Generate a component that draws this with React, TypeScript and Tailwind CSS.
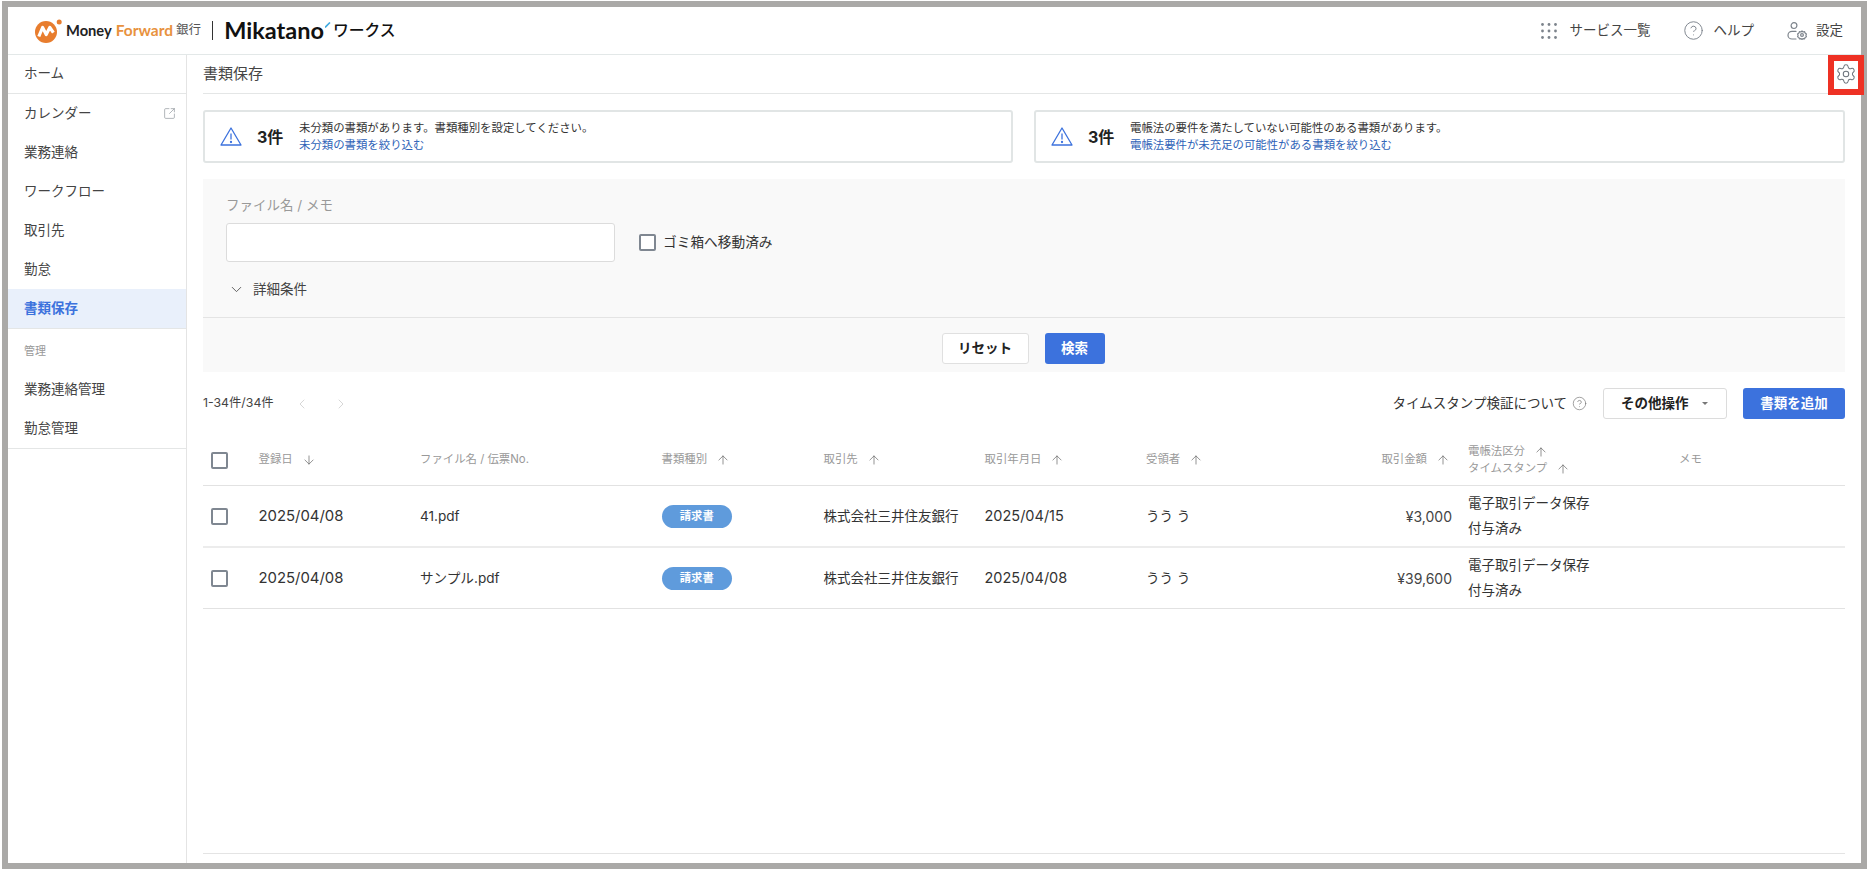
import { ChevronDown, ChevronLeft, ChevronRight, ArrowUp, ArrowDown, Settings, SquareArrowOutUpRight, CircleHelp } from 'lucide-react';

const navTop = ['カレンダー', '業務連絡', 'ワークフロー', '取引先', '勤怠'];

const rows = [
  { date: '2025/04/08', file: '41.pdf', dealt: '2025/04/15', amount: '¥3,000' },
  { date: '2025/04/08', file: 'サンプル.pdf', dealt: '2025/04/08', amount: '¥39,600' },
];

const gridCols = 'grid grid-cols-[55.5px_161.5px_241.5px_162px_161px_161.5px_154px_168px_211px_1fr]';

const GridDots = () => (
  <svg width="16" height="16" viewBox="0 0 16 16" fill="#7d848c">
    {[1.5, 8, 14.5].map((y) =>
      [1.5, 8, 14.5].map((x) => <circle key={`${x}-${y}`} cx={x} cy={y} r="1.4" />)
    )}
  </svg>
);

const UserGear = () => (
  <svg width="20" height="18" viewBox="0 0 20 18" fill="none" stroke="#7d848c" strokeWidth="1.2">
    <circle cx="7" cy="3.6" r="2.9" />
    <path d="M9 9.4H5C2.8 9.4 1 11 1 13.2S2.8 17 5 17h4" strokeLinecap="round" />
    <circle cx="15" cy="13" r="1.4" />
    <path d="M15 9l1.1 1 1.5-.3.5 1.4 1.3.9-.5 1.4.5 1.4-1.3.7-.5 1.4-1.5-.3-1.1.8-1.1-.8-1.5.3-.5-1.4-1.3-.7.5-1.4-.5-1.4 1.3-.9.5-1.4 1.5.3z" strokeLinejoin="round" />
  </svg>
);

const WarnIcon = () => (
  <svg width="22" height="19" viewBox="0 0 22 19" fill="none" stroke="#3c72dd" strokeWidth="1.3" className="shrink-0">
    <path d="M11 1l10 17H1z" strokeLinejoin="round" />
    <path d="M11 6.5v6" />
    <circle cx="11" cy="15" r="0.5" fill="#3c72dd" />
  </svg>
);

const Logo = () => (
  <div className="flex items-center">
    <svg width="27" height="24" viewBox="0 0 27 24" className="ml-[27px] shrink-0">
      <circle cx="11" cy="13" r="11" fill="#e87d2e" />
      <path d="M3.8 17.5L7.6 8.5l3.6 7 3.6-7 3.6 5.2" fill="none" stroke="#fff" strokeWidth="3.2" strokeLinejoin="round" />
      <circle cx="24.2" cy="3" r="2.5" fill="#e87d2e" />
    </svg>
    <span className="ml-[4px] font-['Lato',sans-serif] text-[14.7px] font-bold text-[#222] leading-none">Money</span>
    <span className="ml-[4px] font-['Lato',sans-serif] text-[15.5px] font-bold text-[#e8923e] leading-none">Forward</span>
    <span className="ml-[3px] text-[12.5px] text-[#555] leading-none">銀行</span>
    <div className="ml-[11px] w-px h-[19px] bg-[#333]" />
    <span className="ml-[11px] font-['Lato',sans-serif] text-[23.5px] font-bold text-[#111] leading-none">Mikatano</span>
    <svg width="6" height="6" viewBox="0 0 6 6" className="-mt-[11px] ml-[1px]">
      <path d="M0 5.5L5 0.5" stroke="#3fa9e0" strokeWidth="1.6" />
    </svg>
    <span className="ml-[2px] text-[15.8px] font-medium text-[#111] leading-none">ワークス</span>
  </div>
);

const NavItem = ({ label, active, external }: { label: string; active?: boolean; external?: boolean }) => (
  <div className={`h-[39px] flex items-center justify-between pl-4 pr-[10px] text-[13.5px] ${active ? 'bg-[#e9f0fb] text-[#3c72dd] font-bold' : 'text-[#444]'}`}>
    {label}
    {external && <SquareArrowOutUpRight size={13} strokeWidth={1.2} className="text-[#888f96]" />}
  </div>
);

const AlertCard = ({ text, link }: { text: string; link: string }) => (
  <div className="h-[53px] flex items-center pl-[15px] border-2 border-[#e1e5e5] rounded-[3px] bg-white">
    <WarnIcon />
    <span className="ml-[15px] w-[42px] shrink-0 text-[16px] font-bold text-[#222]">3件</span>
    <div className="text-[11.4px] leading-[17px]">
      <p className="text-[#333]">{text}</p>
      <p className="text-[#2f63b8]">{link}</p>
    </div>
  </div>
);

const Sort = ({ label, down }: { label: string; down?: boolean }) => (
  <span className="flex items-center gap-[9px]">
    {label}
    {down ? <ArrowDown size={14} strokeWidth={1.2} className="text-[#666]" /> : <ArrowUp size={14} strokeWidth={1.2} className="text-[#666]" />}
  </span>
);

const Checkbox = () => <div className="w-[17px] h-[17px] border-2 border-[#7f8791] rounded-[2px] bg-white ml-2" />;

export default function App() {
  return (
    <div lang="ja" className="ml-[2px] mt-px w-[1865px] h-[868px] border-[6px] border-[#aaa9a7] flex flex-col bg-white font-[Inter,'Noto_Sans_CJK_JP',sans-serif] text-[#333]">
      <header className="h-[48px] shrink-0 border-b border-[#e3e8e8] flex items-center justify-between">
        <Logo />
        <div className="flex items-center text-[13.5px] text-[#444] pr-[18px]">
          <GridDots />
          <span className="ml-[13px]">サービス一覧</span>
          <CircleHelp size={21} strokeWidth={1.1} className="ml-[32px] text-[#7d848c]" />
          <span className="ml-[10px]">ヘルプ</span>
          <div className="ml-[33px]"><UserGear /></div>
          <span className="ml-[9px]">設定</span>
        </div>
      </header>

      <div className="flex flex-1 min-h-0">
        <aside className="w-[179px] shrink-0 border-r border-[#e4e4e4]">
          <div className="h-[39px] flex items-center pl-4 pb-px text-[13.5px] text-[#444] border-b border-[#e4e6e6]">ホーム</div>
          <div className="border-b border-[#e4e6e6]">
            {navTop.map((label) => (
              <NavItem key={label} label={label} external={label === 'カレンダー'} />
            ))}
            <NavItem label="書類保存" active />
          </div>
          <div className="h-[41px] flex items-center pl-4 pt-[3px] text-[11px] text-[#999]">管理</div>
          <div className="border-b border-[#e4e6e6]">
            <NavItem label="業務連絡管理" />
            <NavItem label="勤怠管理" />
          </div>
        </aside>

        <main className="relative flex-1 min-w-0 px-4 flex flex-col">
          <div className="h-[39px] shrink-0 flex items-center border-b border-[#e4e6e6] text-[15px] text-[#444]">書類保存</div>
          <div className="absolute -right-[3px] top-0 w-[36px] h-[40px] border-[6px] border-[#ee3124] bg-white flex items-center justify-center pb-[3px]">
            <Settings size={22} strokeWidth={1.1} className="text-[#6d747c] shrink-0" />
          </div>

          <div className="mt-4 grid grid-cols-[810px_811px] justify-between">
            <AlertCard text="未分類の書類があります。書類種別を設定してください。" link="未分類の書類を絞り込む" />
            <AlertCard text="電帳法の要件を満たしていない可能性のある書類があります。" link="電帳法要件が未充足の可能性がある書類を絞り込む" />
          </div>

          <section className="mt-4 h-[193px] shrink-0 bg-[#f9f9f9] flex flex-col">
            <div className="h-[139px] px-[23px] pt-4 border-b border-[#e4e4e4]">
              <p className="h-5 leading-5 text-[13.5px] text-[#999]">ファイル名 / メモ</p>
              <div className="mt-2 flex items-center">
                <div className="w-[389px] h-[39px] border border-[#dcdcdc] rounded-[3px] bg-white" />
                <div className="ml-[24px] w-[17px] h-[17px] border-2 border-[#7f8791] rounded-[2px] bg-white" />
                <span className="ml-[7px] text-[13.7px] text-[#333]">ゴミ箱へ移動済み</span>
              </div>
              <div className="mt-[17px] flex items-center text-[13.5px] text-[#444]">
                <ChevronDown size={17} strokeWidth={1.3} className="ml-[2px] text-[#555]" />
                <span className="ml-2">詳細条件</span>
              </div>
            </div>
            <div className="flex-1 flex justify-center items-start pt-[15px] gap-4 pr-[2px]">
              <button className="w-[87px] h-[31px] border border-[#e0e0e0] rounded-[3px] bg-white text-[13.5px] font-bold text-[#222]">リセット</button>
              <button className="w-[60px] h-[31px] rounded-[3px] bg-[#3c72dd] text-[13.5px] font-bold text-white">検索</button>
            </div>
          </section>

          <div className="mt-4 h-[31px] shrink-0 flex items-center">
            <span className="text-[12.3px] text-[#444]">1-34件/34件</span>
            <ChevronLeft size={16} strokeWidth={1.1} className="ml-[20px] text-[#c8c8c8]" />
            <ChevronRight size={16} strokeWidth={1.1} className="ml-[23px] text-[#c8c8c8]" />
            <span className="ml-auto text-[13.5px] text-[#333]">タイムスタンプ検証について</span>
            <CircleHelp size={15} strokeWidth={1.1} className="ml-[5px] text-[#777]" />
            <button className="ml-4 w-[124px] h-[31px] border border-[#dcdcdc] rounded-[3px] bg-white flex items-center pl-[17px] text-[13.5px] font-bold text-[#222]">
              その他操作
              <span className="ml-[13px] w-0 h-0 border-x-[3px] border-x-transparent border-t-[3px] border-t-[#777]" />
            </button>
            <button className="ml-4 w-[102px] h-[31px] rounded-[3px] bg-[#3c72dd] text-[13.5px] font-bold text-white">書類を追加</button>
          </div>

          <div className={`mt-4 h-[51px] shrink-0 border-b border-[#e2e2e2] items-center text-[11.4px] text-[#999] ${gridCols}`}>
            <Checkbox />
            <Sort label="登録日" down />
            <span>ファイル名 / 伝票No.</span>
            <Sort label="書類種別" />
            <Sort label="取引先" />
            <Sort label="取引年月日" />
            <Sort label="受領者" />
            <div className="pr-[18px] flex justify-end"><Sort label="取引金額" /></div>
            <div className="leading-[17px]">
              <Sort label="電帳法区分" />
              <Sort label="タイムスタンプ" />
            </div>
            <span>メモ</span>
          </div>

          {rows.map((row, i) => (
            <div key={row.file} className={`shrink-0 items-center text-[14.9px] text-[#333] ${gridCols} ${i === 0 ? 'border-b-2 border-[#ececec] h-[62px]' : 'border-b border-[#e2e2e2] h-[61px]'}`}>
              <Checkbox />
              <span>{row.date}</span>
              <span className="text-[13.6px]">{row.file}</span>
              <span className="w-[70.5px] h-[23px] rounded-full bg-[#5f9bdc] text-white text-[11.3px] font-bold flex items-center justify-center">請求書</span>
              <span className="text-[13.5px]">株式会社三井住友銀行</span>
              <span className="text-[14.5px]">{row.dealt}</span>
              <span className="text-[13.5px]">うう う</span>
              <span className="pr-4 text-right text-[14px] text-[#444]">{row.amount}</span>
              <div className="text-[13.5px] leading-[25px]">
                <p>電子取引データ保存</p>
                <p>付与済み</p>
              </div>
              <span />
            </div>
          ))}

          <div className="mt-auto mb-[9px] border-t border-[#e4e4e4]" />
        </main>
      </div>
    </div>
  );
}
